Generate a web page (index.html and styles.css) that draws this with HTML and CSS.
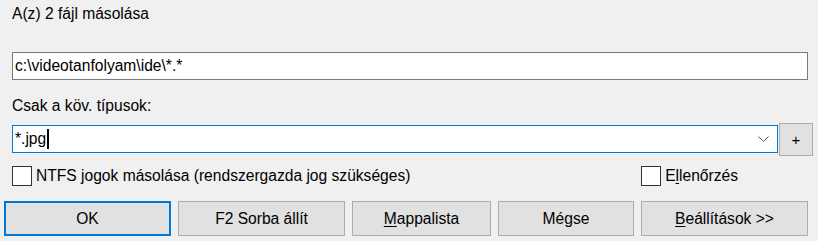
FILE: index.html
```html
<!DOCTYPE html>
<html>
<head>
<meta charset="utf-8">
<link rel="stylesheet" href="styles.css">
</head>
<body>
<div class="dialog">
  <div class="title">A(z) 2 fájl másolása</div>
  <div class="field path">c:\videotanfolyam\ide\*.*</div>
  <div class="label">Csak a köv. típusok:</div>
  <div class="filter-row">
    <div class="field combo">
      <span class="value">*.jpg<span class="caret"></span></span>
      <svg class="chevron" width="11" height="6" viewBox="0 0 11 6"><path d="M0.5 0.5 L5.5 5.5 L10.5 0.5" fill="none" stroke="#555" stroke-width="1"/></svg>
    </div>
    <div class="plus">+</div>
  </div>
  <div class="check-row">
    <label class="check"><span class="box"></span><span>NTFS jogok másolása (rendszergazda jog szükséges)</span></label>
    <label class="check"><span class="box"></span><span>E<u>l</u>lenőrzés</span></label>
  </div>
  <div class="buttons">
    <div class="btn default w1">OK</div>
    <div class="btn w1">F2 Sorba állít</div>
    <div class="btn w2"><span><u>M</u>appalista</span></div>
    <div class="btn w3">Mégse</div>
    <div class="btn w1"><span><u>B</u>eállítások &gt;&gt;</span></div>
  </div>
</div>
</body>
</html>
```
FILE: styles.css
```css
html, body {
  margin: 0;
  padding: 0;
  background: #f0f0f0;
}
.dialog {
  width: 818px;
  height: 241px;
  font-family: "Liberation Sans", Arial, sans-serif;
  font-size: 15.6px;
  color: #000;
  display: flex;
  flex-direction: column;
  box-sizing: border-box;
  padding: 4px 0 0 12px;
}
.title {
  height: 20px;
  line-height: 20px;
}
.field {
  box-sizing: border-box;
  height: 28px;
  background: #fff;
  border: 1px solid #7a7a7a;
  line-height: 26px;
  padding-left: 2px;
}
.path {
  width: 796px;
  margin-top: 28px;
}
.label {
  margin-top: 16px;
  height: 20px;
  line-height: 20px;
}
.filter-row {
  display: flex;
  align-items: flex-start;
  margin-top: 7px;
}
.combo {
  width: 766px;
  margin-top: 2px;
  border-color: #0078d7;
  display: flex;
  align-items: center;
  justify-content: space-between;
  padding-right: 8px;
}
.value {
  display: flex;
  align-items: center;
}
.caret {
  display: inline-block;
  width: 2px;
  height: 20px;
  background: #000;
  margin-left: 1px;
}
.chevron {
  display: block;
}
.plus {
  box-sizing: border-box;
  width: 34px;
  height: 33px;
  margin-left: 1px;
  background: #e1e1e1;
  border: 1px solid #adadad;
  display: flex;
  align-items: center;
  justify-content: center;
  font-size: 15px;
}
.check-row {
  display: flex;
  justify-content: space-between;
  width: 726px;
  margin-top: 10px;
  height: 20px;
}
.check {
  display: flex;
  align-items: center;
  gap: 4px;
}
.box {
  box-sizing: border-box;
  width: 20px;
  height: 20px;
  background: #fff;
  border: 1px solid #333;
}
.buttons {
  display: flex;
  gap: 7px;
  margin-top: 15px;
  margin-left: -8px;
}
.btn {
  box-sizing: border-box;
  height: 35px;
  background: #e1e1e1;
  border: 1px solid #adadad;
  display: flex;
  align-items: center;
  justify-content: center;
}
.btn.default {
  border: 2px solid #0078d7;
}
.w1 { width: 167px; }
.w2 { width: 139px; }
.w3 { width: 136px; }
u {
  text-decoration: underline;
  text-underline-offset: 2px;
}
```
